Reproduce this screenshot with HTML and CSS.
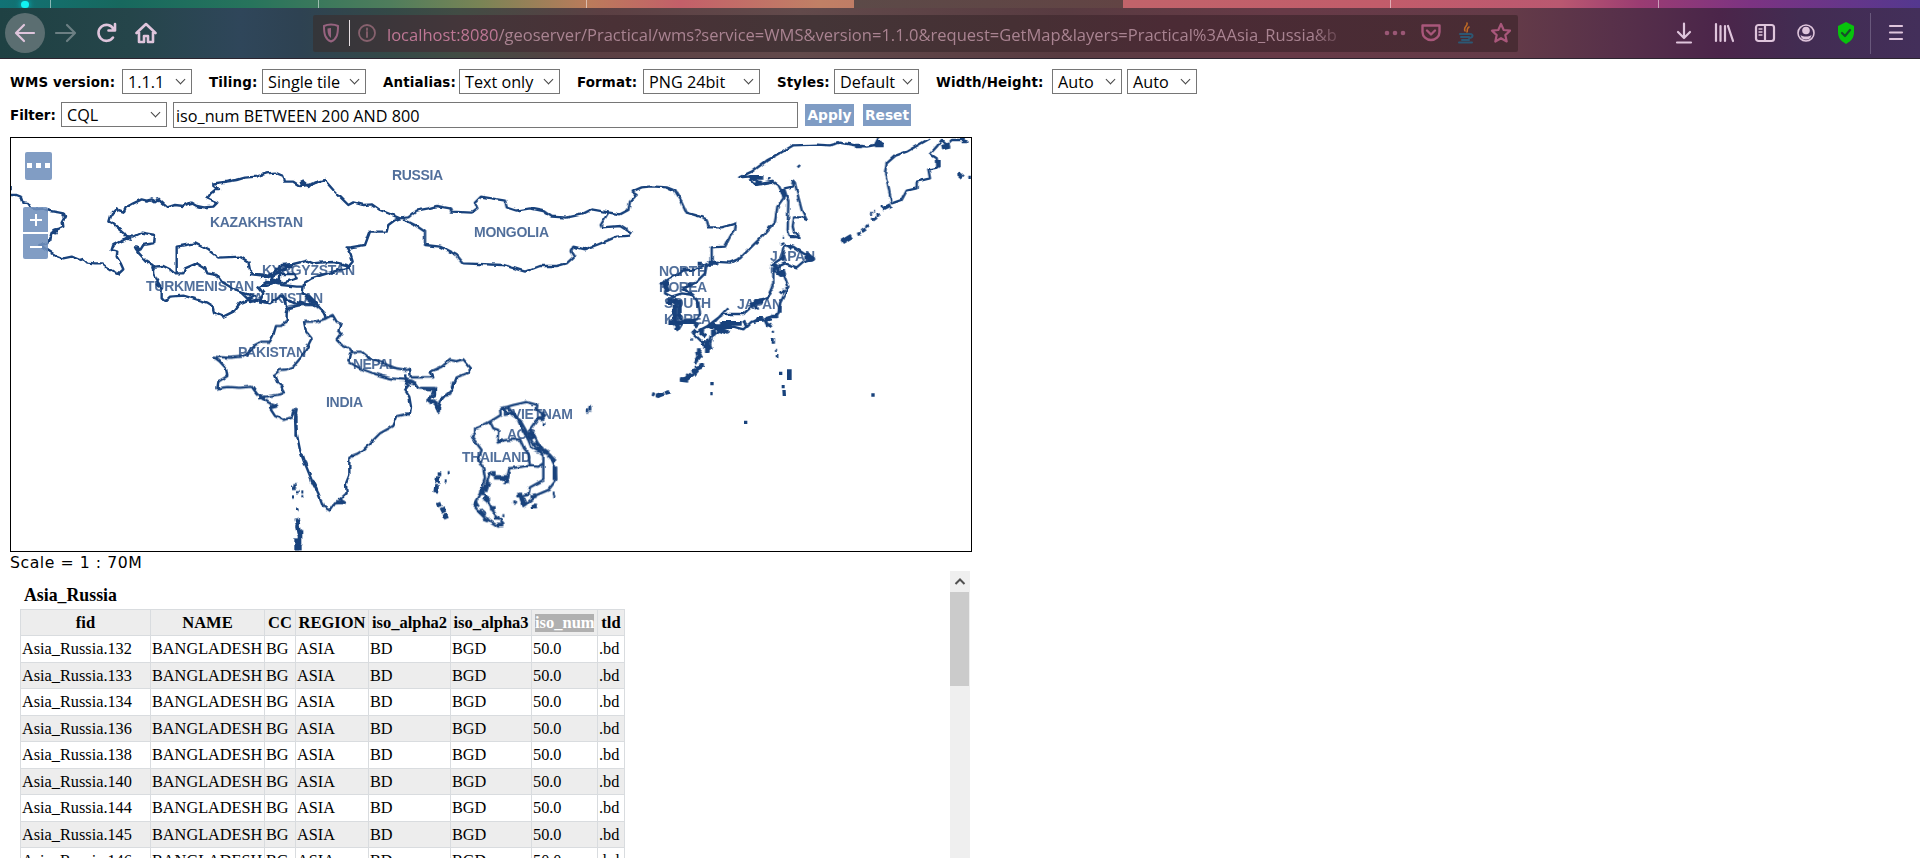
FILE: index.html
```html
<!DOCTYPE html>
<html lang="en">
<head>
<meta charset="utf-8">
<title>OpenLayers map preview</title>
<link rel="stylesheet" href="styles.css">
</head>
<body>
<header class="chrome">
  <div class="tabs"><i class="glow"></i><i class="sep s1"></i><i class="sep s2"></i><i class="sep s3"></i><i class="active-tab"></i><i class="sep s4"></i><i class="sep s5"></i></div>
  <nav class="navbar">
    <span class="back"><svg width="24" height="24" viewBox="0 0 24 24"><path d="M21 12H4M11 4l-8 8 8 8"/></svg></span>
    <svg class="forward" width="24" height="24" viewBox="0 0 24 24"><path d="M2 12h18M13 4l8 8-8 8"/></svg>
    <svg class="reload" width="22" height="22" viewBox="0 0 22 22"><path d="M17 15.500A8 8 0 1 1 17.500 7M19 2v6.500h-6.500"/></svg>
    <svg class="home" width="22" height="22" viewBox="0 0 22 22"><path d="M1.500 11 11 2l9.500 9M4 10v10h5v-6h4v6h5V10"/></svg>
    <div class="urlbar">
      <svg class="shield" width="18" height="20" viewBox="0 0 18 20"><path d="M9 1.500c3 0 5 .5 7 1.500 0 8-1 13-7 15.500C3 16 2 11 2 3c2-1 4-1.500 7-1.500z"/><path class="solid" d="M9 5c-1.500 0-2.500.2-3.500.6 0 4.400.5 7.400 3.500 9.400z"/></svg>
      <i class="rule"></i>
      <svg class="info" width="20" height="20" viewBox="0 0 20 20"><circle cx="10" cy="10" r="8"/><path d="M10 9v5M10 5.500v1.500"/></svg>
      <span class="url"><b>localhost:8080</b>/geoserver/Practical/wms?service=WMS&amp;version=1.1.0&amp;request=GetMap&amp;layers=Practical%3AAsia_Russia&amp;b</span>
      <svg class="dots" width="22" height="20" viewBox="0 0 22 20"><circle cx="3" cy="10" r="2.300"/><circle cx="11" cy="10" r="2.300"/><circle cx="19" cy="10" r="2.300"/></svg>
      <svg class="pocket" width="20" height="20" viewBox="0 0 20 20"><path d="M1.500 2.500h17V9a8.500 8 0 0 1-17 0zM6 7.500l4 4 4-4"/></svg>
      <svg class="java" width="18" height="22" viewBox="0 0 18 22"><path class="steam" d="M10 1c1 3-4 4-2 8M12 5c-3 2-1 3-2 5"/><path class="cup" d="M3 12h10M4 15h8M5 18h7M2 20.500h13M13 12c4 0 3 4-1 4"/></svg>
      <svg class="star" width="22" height="22" viewBox="0 0 22 22"><path d="m11 2 2.700 6 6.300.7-4.700 4.400 1.400 6.400-5.700-3.300-5.700 3.300 1.400-6.400L2 8.700 8.300 8z"/></svg>
    </div>
    <svg class="tool" width="20" height="22" viewBox="0 0 20 22"><path d="M10 1.500v14M4 10l6 6 6-6M3 20.500h14"/></svg>
    <svg class="tool" width="20" height="22" viewBox="0 0 20 22"><path d="M2 2v17M6.500 4v15M11 4v15M14 4l5 15"/></svg>
    <svg class="tool" width="22" height="22" viewBox="0 0 22 22"><rect x="2" y="3" width="18" height="16" rx="2.500"/><path d="M11 3v16"/><path class="thin" d="M5 7h3M5 10h3M5 13h3"/></svg>
    <svg class="tool account" width="20" height="22" viewBox="0 0 20 22"><circle cx="10" cy="11" r="8"/><circle class="fill" cx="10" cy="8.500" r="3.800"/><path class="fill" d="M4.500 13c3 2 8 2 11 0-1 4-3 4.500-5.500 4.500S5.500 17 4.500 13z"/></svg>
    <svg class="guard" width="18" height="22" viewBox="0 0 18 22"><path class="body" d="M9 0l8 4v6c0 6-3 9-8 12-5-3-8-6-8-12V4z"/><path class="tick" d="M5 11l3 3 5-6"/></svg>
    <i class="divider"></i>
    <svg class="tool" width="18" height="22" viewBox="0 0 18 22"><path d="M3 4h12M3 10.500h12M3 17h12"/></svg>
  </nav>
</header>

<main>
  <section class="options">
    <span class="label l-wms">WMS version:</span><span class="select w69">1.1.1</span>
    <span class="label l-til">Tiling:</span><span class="select w104">Single tile</span>
    <span class="label l-ant">Antialias:</span><span class="select w101">Text only</span>
    <span class="label l-for">Format:</span><span class="select w117">PNG 24bit</span>
    <span class="label l-sty">Styles:</span><span class="select w85">Default</span>
    <span class="label l-wh">Width/Height:</span><span class="select w70">Auto</span><span class="select w70 next">Auto</span>
  </section>
  <section class="filter">
    <span class="label l-fil">Filter:</span><span class="select w105">CQL</span>
    <span class="query">iso_num BETWEEN 200 AND 800</span>
    <span class="button apply">Apply</span><span class="button reset">Reset</span>
  </section>

  <section class="map">
    <svg class="countries" viewBox="11 138 960 413" width="960" height="413">
      <filter id="rough" filterUnits="userSpaceOnUse" x="11" y="138" width="960" height="413" color-interpolation-filters="sRGB">
        <feTurbulence type="fractalNoise" baseFrequency=".17" numOctaves="1" seed="4"/>
        <feDisplacementMap in="SourceGraphic" scale="4" xChannelSelector="R" yChannelSelector="G"/>
      </filter>
      <g filter="url(#rough)">
      <!-- Caspian, Kazakhstan, Turkmenistan, Uzbekistan -->
      <g transform="translate(0 130) scale(.33333)">
        <path d="M32 168v10M32 195H50L62 200 68 217 84 219 95 235 110 238 130 236 150 243 175 247 190 250 195 262 188 275 190 290 175 297 160 300 170 310 155 308 150 325 145 340 118 345 132 353 150 365 170 378 190 385 215 380 240 390 250 387 262 398 285 400 305 400 320 412 340 425 355 432 370 418 362 400 350 380 352 365 335 360 340 345 360 335 385 325 372 308 350 290 335 278 328 275 335 250 350 235 355 243 370 248 378 232 400 220 425 208 440 212 455 208 465 214 475 208 490 222 502 232 525 225 550 228 572 218 590 228 612 232 640 230 652 218 622 205 632 190 645 180 660 180 640 168 640 160 680 155 710 150 735 143 770 140 800 130 825 128 850 138 855 155 880 155 900 168 925 165 955 155 978 150"/>
        <path d="M370 318 400 320 425 308 465 315 462 340 430 345 422 358 405 352 415 368 440 395 458 405 460 430 470 450 485 475 485 505 495 515 510 500 550 497 580 505 620 518 640 530 645 550 670 560 700 545 720 520 745 510 765 498 740 492 715 485 690 470 665 455 650 435 622 430 615 415 590 400 555 415 550 430 525 430 510 418 490 408 460 410M530 430V350L585 340 625 360 655 383 720 380 745 395 750 420 762 432 800 435"/>
        <path class="blot" d="M378 322l16 6M406 354l16 6M455 410l10 4M468 462l12 8M644 176h12M902 164h14M160 302h14M150 320v12"/>
      </g>
      <!-- Kyrgyzstan, Tajikistan -->
      <g transform="translate(200 150) scale(.33333)">
        <path d="M300 100 310 95 325 108 355 95 375 92 400 120 425 145 445 165 460 157 490 165 515 163 540 180 570 192 600 205 585 210 565 225 560 245 510 245 495 285 450 292 440 292 452 315 458 335 445 350"/>
        <path d="M150 372 200 378 220 370 245 345 280 342 320 332 340 340 360 338 400 336 440 345 448 352 400 365 365 375 335 385 312 400 308 430 330 440 345 455 365 480 380 500M195 385 230 372 285 372 290 385 250 398 215 400 175 410 190 430 180 455 210 460 250 435 260 450 285 460 345 460M240 345V400M170 415 200 395 245 405 290 410 310 410M230 350 215 385 240 390M120 425l30 28 30-5M250 440l10 35 60-15 20 5"/>
        <path class="blot" d="M210 392h30M148 440v10M230 372l30-22M180 380h22M318 438l22 20M290 455l40 8M255 350h22M185 455h20"/>
      </g>
      <!-- Pakistan, India, Nepal -->
      <g transform="translate(190 290) scale(.33333)">
        <path d="M408 85 380 95 342 95 348 125 365 145 350 175 335 200 310 230 290 238 270 240 252 255 262 278 275 290 282 310 260 315 225 320 205 325M375 45 330 45 295 50 290 70 290 95 272 108 258 108 250 135 240 155 215 155 195 165 180 185 155 200 120 203 70 200 90 215 108 235 112 258 85 275 82 295 115 291 150 293 185 290 200 310 215 325 240 340 265 348 240 355 255 378 280 390 305 382 312 360 320 360 315 390 320 430 330 480 345 520 365 570 385 610 400 650 420 662 435 640 465 638 450 628 470 610 468 580 478 555 478 500 500 492 520 480 545 455 570 430 610 408 622 378 660 370 663 350 658 320 645 300 660 285 648 275 645 250"/>
        <path d="M345 20 375 45 400 65 408 85 428 75 440 95 452 100 445 120 455 130 440 150 455 165 480 178 490 185 515 185 540 205 580 220 620 235 650 240 660 235 662 262 730 262 722 245 755 230 780 210 800 214 820 208 843 235 830 250 800 262 785 300 762 320 750 335 745 365 735 340 712 330 735 315 735 298 685 295 670 275 650 270 600 265 550 250 510 235 475 215 480 190 490 185"/>
        <path class="blot" d="M305 370h16M240 350l25-4M645 372h18M648 270l30 10M650 285v14M440 638h24M205 322h20M720 325v12M745 350v10M318 375v65M335 490l12 35M365 570l16 30M480 498h10"/>
        <path class="blot fat" d="M747 544v14M745 560l-3 20M740 585l-3 22M744 638l5 12M755 652l8 16M764 672l6 14M320 685l4 20M322 705l6 30M330 720v45M320 745v34M328 750v28"/>
        <path class="blot" d="M303 595h14M315 582v10M318 605h8M306 621h6M334 606h6M334 620h6M318 658h8M764 573h6M773 548h6"/>
      </g>
      <!-- Mongolia, northern China border -->
      <g transform="translate(400 130) scale(.33333)">
        <path d="M0 265 25 262 50 242 85 235 110 228 150 235 155 245 215 248 232 235 225 218 243 200 315 212 320 232 350 242 390 235 430 243 455 260 500 263 545 253 575 238 625 247 602 285 605 292 660 288 695 310 690 317 650 320 615 335 590 345 555 358 520 350 512 365 522 380 500 400 470 408 420 408 375 425 310 405 190 400 170 375 120 350 75 345 75 305 45 285 10 268M625 247 660 253 685 240 690 215 710 195 695 185 725 172 755 169 800 172 825 182 845 215 860 248 895 258 920 268 925 292 965 292 1008 280 1005 300 990 320 975 350 935 352 935 395"/>
      </g>
      <!-- Far East coast, Korea, Japan -->
      <g transform="translate(640 130) scale(.33333)">
        <path d="M215 395 270 398 300 385 335 350 370 315 405 275 412 230 430 205 430 195 415 165 400 155 370 160 345 165 330 150 360 140 325 140 298 142 335 125 380 92 420 70 460 46 530 44 570 46 600 38 640 45 680 50 705 45 715 25M432 175 445 215 443 300 450 320 478 322 462 305 458 290 462 262 485 262 500 270 485 240 472 190 465 160 455 150 458 170 432 175M870 25 835 45 800 65 765 78 740 100 735 130 745 170 755 220 785 210 800 182 830 175 830 155 870 145 865 118 895 112 890 85 870 72 890 50 905 30 920 45 935 30 975 30"/>
        <path d="M215 395 195 405 165 420 130 420 100 440 65 460 80 465 75 490 95 500 110 510 105 540 105 570 115 600 130 575 170 568 180 550 175 520 160 495 125 490 95 500M160 495 130 475 165 460 195 430 200 405 235 395M435 345 460 350 490 370 522 385 490 395 470 412 435 400 415 410 395 405 425 385 435 345M395 405 430 430 445 470 420 520 415 550 370 570 335 575 310 598 280 590 240 600 200 590 250 552 310 552 345 520 385 500 400 460 400 425M215 585 262 535M200 590 160 610 190 640 205 665 215 620 240 600M165 700l20-40M120 750l40-15 25-30"/>
        <path class="blot fat" d="M330 142h40M345 155l20 5M645 48h24M705 45h26M718 32v10M425 180l10 20M455 152l8 10M75 465l10 20M90 510l30 10M105 525v50M85 578h45M110 585v15M130 575h38M205 400h30M225 590h50M240 580h65M235 598l30 10M200 630l12 30M190 650h24M185 595v20M170 600l-12 12M400 408h12M408 425l20 10M415 410v25M350 568h20M395 558h20M330 525l40-15M170 690l10-15M165 715l20-5M120 748l25 3M140 745l15-12M512 380v12M50 798l22-8M75 788l16-4M605 336l30-18M728 238l24-12M895 90v22M905 52l25-6M955 130l14 12"/>
        <path class="blot fat" d="M88 505v20M118 510v60M70 460h16M140 465h14M180 395v12M165 580l8 8M185 610l14 10M188 630v14M178 655v12M205 640v22M195 662h12M220 600v16M205 588h20M172 665l6 20M185 700v14M155 725l14-4M145 735v14M400 412v18M425 420v20M345 515h12M355 510l12 6M378 568l16-4M500 378v10M218 585l10 8M90 572l20 12"/>
        <path class="blot" d="M474 106l5 5M385 145l4 5M652 313l10-3M665 305l12-8M678 292l8-8M698 270l12-8M710 258l10-4M690 250h6M693 268h5M700 244h5M722 230h6M985 142h8M965 35h20M153 627h6M405 661h6M407 677h8M397 605v6M400 622v22M375 570l10 20M388 580l8 12M424 338l4 8M37 792l6 3M470 312l8 12M450 320h14M443 345l14 12M430 375v20M395 480l-8 15M420 490l12-12M310 575l12 15M345 525l5 12M420 548v-20M428 322h4M436 475h8M340 575l15-8"/>
      </g>
      <!-- Thailand, Laos, Vietnam, Cambodia -->
      <g transform="translate(420 380) scale(.33333)">
        <path d="M240 85 262 80 280 75 320 66 352 75 350 90 375 105 350 122 330 150 345 170 360 200 390 225 405 260 408 300 385 330 350 345 310 378 300 350 325 345 330 322 370 300 370 260 370 225 345 200 325 165 300 120 270 100 240 85M240 85 242 105 215 122 200 130 165 145 165 160 155 170 185 210 175 240 190 265 195 295 180 340 160 375 190 410 235 440 250 430 220 395 205 365 190 340 210 280 230 290 260 300 268 265 325 258 355 260 370 250M210 125 220 145 235 150 232 185 260 180 300 178 312 205 325 220 330 260M262 80 290 110 305 145 325 180 335 205 355 215M255 85v20l25-5M0 24h45L40 40 25 60 50 70 55 92 65 50 90 45 100 5"/>
        <path class="blot fat" d="M365 100l12 8M355 115l15 2M230 185l20-4M345 185l25 20M355 200l30 20M385 225l20 20M405 260v40M215 280h12M225 292h38M205 305l-10 30M185 320v25M165 365l8 14M175 390l20 18M190 415l15 6M230 435h20M190 350l18 12M292 345h14M305 352l10 26M335 350l14-4M330 155l12 20M210 385h14M230 405v14M28 65h18M505 85h12M260 300v12M335 378h16"/>
        <path class="blot" d="M495 93h10M368 132h8M247 407h6M398 340h6M400 350h6M280 366h8M55 88v8M697 42h6M707 47h12"/>
      </g>
      </g>
      <!-- Pacific islets -->
      <g transform="translate(640 130) scale(.33333)">
        <path class="blot" d="M211 761h10M211 791h7M417 730h10M694 795h10M312 877h10M425 770h9M432 780l1 18"/>
        <path class="blot" d="M446 718v32M450 718v32"/>
      </g>
      <g class="names">
        <text x="392" y="180" textLength="51">RUSSIA</text>
        <text x="210" y="227" textLength="93">KAZAKHSTAN</text>
        <text x="474" y="237" textLength="75">MONGOLIA</text>
        <text x="262" y="275" textLength="93">KYRGYZSTAN</text>
        <text x="146" y="291" textLength="108">TURKMENISTAN</text>
        <text x="246" y="303" textLength="77">TAJIKISTAN</text>
        <text x="238" y="357" textLength="68">PAKISTAN</text>
        <text x="353" y="369" textLength="44">NEPAL</text>
        <text x="326" y="407" textLength="37">INDIA</text>
        <text x="512" y="419" textLength="61">VIETNAM</text>
        <text x="507" y="439" textLength="29">AOS</text>
        <text x="462" y="462" textLength="69">THAILAND</text>
        <text x="659" y="276" textLength="48">NORTH</text>
        <text x="659" y="292" textLength="48">KOREA</text>
        <text x="664" y="308" textLength="47">SOUTH</text>
        <text x="664" y="324" textLength="47">KOREA</text>
        <text x="770" y="261" textLength="45">JAPAN</text>
        <text x="737" y="309" textLength="45">JAPAN</text>
      </g>
    </svg>
    <span class="ctl more"><i></i><i></i><i></i></span>
    <span class="ctl zoom-in"></span>
    <span class="ctl zoom-out"></span>
  </section>

  <p class="scale">Scale = 1 : 70M</p>

  <section class="results">
    <div class="features">
      <h2>Asia_Russia</h2>
      <table>
        <colgroup><col class="c1"><col class="c2"><col class="c3"><col class="c4"><col class="c5"><col class="c6"><col class="c7"><col class="c8"></colgroup>
        <tr><th>fid</th><th>NAME</th><th>CC</th><th>REGION</th><th>iso_alpha2</th><th>iso_alpha3</th><th><mark>iso_num</mark></th><th>tld</th></tr>
        <tr><td>Asia_Russia.132</td><td>BANGLADESH</td><td>BG</td><td>ASIA</td><td>BD</td><td>BGD</td><td>50.0</td><td>.bd</td></tr>
        <tr><td>Asia_Russia.133</td><td>BANGLADESH</td><td>BG</td><td>ASIA</td><td>BD</td><td>BGD</td><td>50.0</td><td>.bd</td></tr>
        <tr><td>Asia_Russia.134</td><td>BANGLADESH</td><td>BG</td><td>ASIA</td><td>BD</td><td>BGD</td><td>50.0</td><td>.bd</td></tr>
        <tr><td>Asia_Russia.136</td><td>BANGLADESH</td><td>BG</td><td>ASIA</td><td>BD</td><td>BGD</td><td>50.0</td><td>.bd</td></tr>
        <tr><td>Asia_Russia.138</td><td>BANGLADESH</td><td>BG</td><td>ASIA</td><td>BD</td><td>BGD</td><td>50.0</td><td>.bd</td></tr>
        <tr><td>Asia_Russia.140</td><td>BANGLADESH</td><td>BG</td><td>ASIA</td><td>BD</td><td>BGD</td><td>50.0</td><td>.bd</td></tr>
        <tr><td>Asia_Russia.144</td><td>BANGLADESH</td><td>BG</td><td>ASIA</td><td>BD</td><td>BGD</td><td>50.0</td><td>.bd</td></tr>
        <tr><td>Asia_Russia.145</td><td>BANGLADESH</td><td>BG</td><td>ASIA</td><td>BD</td><td>BGD</td><td>50.0</td><td>.bd</td></tr>
        <tr><td>Asia_Russia.146</td><td>BANGLADESH</td><td>BG</td><td>ASIA</td><td>BD</td><td>BGD</td><td>50.0</td><td>.bd</td></tr>
      </table>
    </div>
    <div class="scrollbar">
      <svg width="20" height="21" viewBox="0 0 20 21"><path d="M5.500 13 10 8.500l4.500 4.500"/></svg>
      <div class="thumb"></div>
    </div>
  </section>
</main>
</body>
</html>
```
FILE: styles.css
```css
* { box-sizing: border-box; }
body {
  margin: 0;
  height: 858px;
  overflow: hidden;
  background: #fff;
  color: #000;
  font-family: "Liberation Serif", serif;
}
svg { display: block; flex: none; fill: none; }

/* browser chrome */
.chrome {
  height: 59px;
  background: linear-gradient(90deg, #117275 0, #17685e 120px, #27745c 250px, #4f7d5c 390px, #798455 480px, #bb7b5b 590px, #c35f69 680px, #c08065 820px, #c1636a 1130px, #c25c6a 1380px, #ba5870 1560px, #9a3c72 1640px, #7c3382 1750px, #54388f 1920px);
}
.tabs { position: relative; height: 8px; overflow: hidden; }
.glow { position: absolute; left: 21px; top: 1px; width: 8px; height: 7px; border-radius: 4px; background: #12f2f2; box-shadow: 0 0 6px #0cd; }
.sep { position: absolute; top: 0; width: 1px; height: 8px; background: rgba(255,255,255,.5); }
.s1 { left: 50px; }
.s2 { left: 318px; }
.s3 { left: 586px; }
.s4 { left: 1390px; }
.s5 { left: 1658px; }
.active-tab { position: absolute; left: 854px; top: 0; width: 269px; height: 8px; background: linear-gradient(90deg, #5c4a48, #624444); }
.navbar {
  display: flex;
  align-items: center;
  height: 51px;
  padding-left: 5px;
  border-bottom: 1px solid #2c2530;
  background: linear-gradient(90deg, #1f4143 0, #25454a 130px, #2f465a 240px, #2e4252 300px, #344947 390px, #424c44 460px, #5b3f43 600px, #624a4b 800px, #583b41 1060px, #673a47 1280px, #643b48 1510px, #57304a 1620px, #4b254a 1720px, #422c52 1800px, #432f5a 1920px);
}
.navbar path, .navbar circle, .navbar rect { stroke: #dfc5dc; stroke-width: 2.2; stroke-linecap: round; stroke-linejoin: round; }
.back { display: flex; align-items: center; justify-content: center; width: 40px; height: 40px; border-radius: 50%; background: #5b6e71; }
.forward { margin-left: 9px; }
.navbar .forward path { stroke: #6c7f83; }
.reload { margin-left: 18px; }
.home { margin-left: 17px; }
.navbar .reload path, .navbar .home path { stroke-width: 2.6; }
.urlbar {
  display: flex;
  align-items: center;
  width: 1205px;
  height: 37px;
  margin-left: 156px;
  padding-left: 9px;
  border-radius: 2px;
  background: linear-gradient(90deg, #34363a 0, #44363a 150px, #4a3136 300px, #443537 500px, #463034 700px, #4b2b35 850px, #492c34 1205px);
}
.navbar .shield path { stroke: #97637f; stroke-width: 2; }
.navbar .shield .solid { fill: #97637f; stroke: none; }
.rule { width: 1px; height: 26px; margin-left: 9px; background: #e8e0e4; }
.info { margin-left: 7px; }
.navbar .info circle, .navbar .info path { stroke: #87616e; stroke-width: 1.8; }
.url {
  width: 958px;
  margin-left: 10px;
  padding-top: 2px;
  overflow: hidden;
  color: #a98391;
  font: 16.550px/35px "Open Sans", "Noto Sans", sans-serif;
  white-space: nowrap;
  -webkit-mask-image: linear-gradient(90deg, #000 925px, transparent 962px);
  mask-image: linear-gradient(90deg, #000 925px, transparent 962px);
}
.url b { color: #be7795; font-weight: 400; }
.dots { margin-left: 39px; }
.navbar .dots circle { fill: #9a5775; stroke: none; }
.pocket { margin-left: 15px; }
.navbar .pocket path { stroke: #a9577b; stroke-width: 2.4; }
.java { margin-left: 16px; }
.navbar .java path { stroke: #2d5773; stroke-width: 2; }
.navbar .java .steam { stroke: #bd6825; stroke-width: 1.6; }
.star { margin-left: 15px; }
.navbar .star path { stroke: #a9577b; stroke-width: 2.2; }
.urlbar + .tool { margin-left: 156px; }
.tool + .tool { margin-left: 20px; }
.navbar .thin { stroke-width: 1.3; }
.navbar .account circle { stroke-width: 1.6; }
.navbar .account .fill { fill: #dfc5dc; stroke: none; }
.guard { margin-left: 21px; }
.navbar .guard .body { fill: #07c40c; stroke: none; }
.navbar .guard .tick { stroke: #17502a; }
.divider { width: 1px; height: 41px; margin: 0 16px 0 15px; background: #69587c; }

/* request options */
main { padding-left: 10px; }
.options, .filter { display: flex; align-items: center; font-family: "DejaVu Sans", sans-serif; }
.options { height: 45px; }
.filter { height: 25px; margin-top: -2px; }
.label { flex: none; padding-top: 1px; font-size: 13.400px; font-weight: 700; letter-spacing: .15px; white-space: nowrap; }
.l-wms { width: 112px; }
.select + .label { padding-left: 17px; }
.l-til { width: 70px; }
.l-ant { width: 93px; }
.l-for { width: 83px; }
.l-sty { width: 74px; }
.l-wh { width: 133px; }
.l-fil { width: 51px; letter-spacing: 0; }
.select {
  position: relative;
  flex: none;
  height: 25px;
  padding-left: 5px;
  border: 1px solid #767676;
  font: 16.200px/25px "Open Sans", "Noto Sans", sans-serif;
  white-space: nowrap;
}
.select::after {
  content: "";
  position: absolute;
  right: 7px;
  top: 6px;
  width: 6px;
  height: 6px;
  border: solid #444;
  border-width: 0 1px 1px 0;
  transform: rotate(45deg);
}
.w69 { width: 70px; }
.w104 { width: 104px; }
.w101 { width: 101px; }
.w117 { width: 117px; }
.w85 { width: 85px; }
.w70 { width: 70px; }
.w105 { width: 106px; }
.next { margin-left: 5px; }
.query {
  width: 625px;
  height: 26px;
  margin-left: 6px;
  padding-left: 2px;
  border: 1px solid #767676;
  font: 16.200px/26px "Open Sans", "Noto Sans", sans-serif;
}
.button { height: 22px; margin-top: 1px; background: #7f9cc4; color: #fff; font-size: 13.800px; font-weight: 700; line-height: 23px; text-align: center; }
.apply { width: 49px; margin-left: 7px; }
.reset { width: 48px; margin-left: 9px; }

/* map */
.map { position: relative; width: 962px; height: 415px; margin-top: 10px; border: 1px solid #000; }
.countries path { stroke: #18427c; stroke-width: 7.200; stroke-linejoin: round; }
.countries .blot { stroke-width: 10; }
.countries .fat { stroke-width: 14; }
.names text { fill: #173f7a; fill-opacity: .75; font: 700 14px "Liberation Sans", Arial, sans-serif; }
.ctl { position: absolute; background: rgba(112,144,188,.88); }
.more { left: 14px; top: 14px; display: flex; align-items: center; justify-content: center; gap: 4px; width: 27px; height: 28px; padding-bottom: 1px; border-radius: 2px; }
.more i { width: 5px; height: 5px; background: #fff; }
.zoom-in, .zoom-out { left: 12px; width: 25px; height: 25px; }
.zoom-in { top: 69px; border-radius: 2px 2px 0 0; }
.zoom-out { top: 96px; border-radius: 0 0 2px 2px; }
.zoom-in::before, .zoom-out::before, .zoom-in::after { content: ""; position: absolute; left: 7px; top: 12px; width: 12px; height: 2px; background: #fff; }
.zoom-in::after { left: 12px; top: 7px; width: 2px; height: 12px; }
.scale { height: 19px; margin: 0; font: 15.700px/22px "DejaVu Sans", sans-serif; letter-spacing: .55px; }

/* feature table */
.results { display: flex; width: 960px; height: 287px; overflow: hidden; }
.features { width: 940px; padding: 12px 0 0 10px; }
.features h2 { height: 26px; margin: 0; padding-left: 4px; font-size: 17.800px; line-height: 24px; }
table { table-layout: fixed; width: 604px; border-collapse: collapse; font-size: 16.500px; }
.c1 { width: 130px; }
.c2 { width: 114px; }
.c3 { width: 31px; }
.c4 { width: 73px; }
.c5 { width: 82px; }
.c6 { width: 81px; }
.c7 { width: 66px; }
.c8 { width: 27px; }
th, td { height: 26px; padding: 0 0 0 1px; border: 1px solid #d9dcdf; line-height: 24px; text-align: left; white-space: nowrap; }
td { font-size: 16.300px; }
th { padding: 0; text-align: center; }
tr:nth-child(even) td { height: 27px; }
tr:nth-child(odd) { background: #ededed; }
mark { display: block; height: 18px; margin: 0 3px; background: #b0b0b0; color: #fff; line-height: 18px; }
.scrollbar { width: 20px; background: #efefef; }
.scrollbar path { stroke: #505050; stroke-width: 2; }
.thumb { width: 19px; height: 94px; background: #cbcbcb; }
```
